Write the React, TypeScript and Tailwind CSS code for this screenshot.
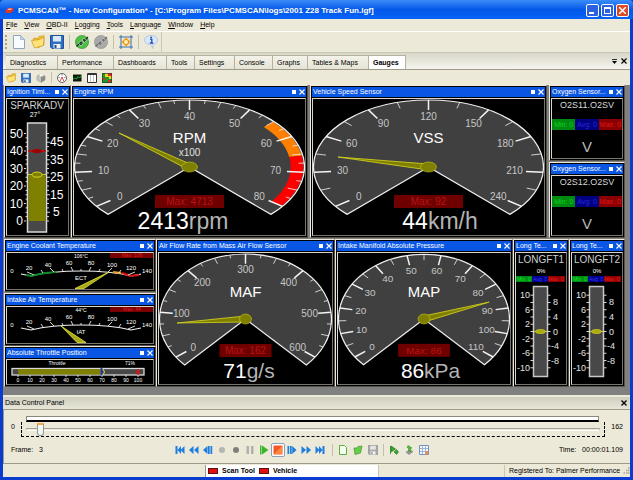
import { useState } from 'react';
import type { ReactNode } from 'react';

const menus = ['File', 'View', 'OBD-II', 'Logging', 'Tools', 'Language', 'Window', 'Help'];

const tabs = [
  { name: 'Diagnostics', width: 'w-[52px]' },
  { name: 'Performance', width: 'w-[56px]' },
  { name: 'Dashboards', width: 'w-[53px]' },
  { name: 'Tools', width: 'w-[28px]' },
  { name: 'Settings', width: 'w-[40px]' },
  { name: 'Console', width: 'w-[38px]' },
  { name: 'Graphs', width: 'w-[35px]' },
  { name: 'Tables & Maps', width: 'w-[61px]' },
  { name: 'Gauges', width: 'w-[37px]' },
];

/* ---------- icons ---------- */

const NewIcon = () => (
  <svg viewBox="0 0 14 14" className="size-full">
    <path d="M1.500 .5h7l4 4v9h-11z" fill="#f8fbff" stroke="#8ea6c4" />
    <path d="M8.500 .5v4h4z" fill="#c9daf0" stroke="#8ea6c4" strokeWidth=".7" />
  </svg>
);

const OpenIcon = () => (
  <svg viewBox="0 0 14 14" className="size-full">
    <path d="M2 5l1-2 4 .5L8 1.500l5-.8v9l-6 3z" fill="#f5c22e" stroke="#c78d12" strokeWidth=".6" />
    <path d="M.5 5.500l7.500-.8L13 2l-.5 8.500-9 2.500z" fill="#ffe27a" stroke="#c78d12" strokeWidth=".6" />
  </svg>
);

const SaveIcon = ({ muted = false }: { muted?: boolean }) => (
  <svg viewBox="0 0 14 14" className="size-full">
    <path d="M.5 .5h13v13H2L.5 12z" fill={muted ? '#a9a9a9' : '#2f6fc4'} stroke={muted ? '#8c8c8c' : '#1e4f99'} />
    <path d="M3 1h8v5.500H3z" fill={muted ? '#e4e4e0' : '#dbe9fb'} />
    <path d="M3.500 9h7v4.500h-7z" fill="#f2f2f2" />
    <path d="M4.500 10h2v3h-2z" fill={muted ? '#8c8c8c' : '#1e4f99'} />
  </svg>
);

const PlugIcon = ({ on = false }: { on?: boolean }) => (
  <svg viewBox="0 0 14 14" className="size-full">
    <circle cx="7" cy="7" r="6.600" fill={on ? '#4cc244' : '#a9a9a9'} stroke={on ? '#2c8a2c' : '#8e8e8e'} strokeWidth=".6" />
    <path d="M1.500 11.500L4 9M10 5l3-3" stroke={on ? '#223' : '#666'} strokeWidth="1.200" />
    <path d="M3.500 8.500L6 5.500l2.500 2.500L6 11zM7 5l2-2 2.500 2.500-2 2z" fill={on ? '#334a36' : '#777'} stroke={on ? '#d8f0d8' : '#d0d0d0'} strokeWidth=".6" />
  </svg>
);

const FitIcon = () => (
  <svg viewBox="0 0 14 14" className="size-full">
    <path d="M2 0v14M12 0v14M0 2h14M0 12h14" stroke="#3a6ea8" strokeWidth="1" />
    <path d="M7 2.500l2 2H5zM7 11.500l2-2H5zM2.500 7l2-2v4zM11.500 7l-2-2v4z" fill="#f2a516" />
    <circle cx="7" cy="7" r="2.600" fill="#fff0b8" stroke="#e59a12" strokeWidth="1.200" />
  </svg>
);

const InfoIcon = () => (
  <svg viewBox="0 0 14 14" className="size-full">
    <path d="M7 .5C3 .5.500 2.500.5 5s2.500 4.500 6 4.500L9 13.500V9.200c3-.5 4.500-2.200 4.500-4.200C13.500 2.500 11 .5 7 .5z" fill="#dbe7fa" stroke="#a4b8dd" strokeWidth=".7" />
    <path d="M6 4.200h1.800v3.600M5.800 8h3.400" stroke="#1650b8" strokeWidth="1.300" fill="none" />
    <circle cx="7.200" cy="2.300" r=".9" fill="#1650b8" />
  </svg>
);

const PrintIcon = () => (
  <svg viewBox="0 0 10 10" className="size-full">
    <path d="M1 3l4-2 4 2v4L5 9.500 1 7z" fill="#c4c4c0" stroke="#999" strokeWidth=".6" />
    <path d="M5 4l4-1v4L5 9.500z" fill="#8b8b88" />
    <path d="M3 1.500L6 .5l1.500 2-3 1z" fill="#f6f6f2" />
  </svg>
);

const DialIcon = () => (
  <svg viewBox="0 0 10 10" className="size-full">
    <circle cx="5" cy="5" r="4.500" fill="#fff" stroke="#444" strokeWidth=".8" />
    <path d="M5 1v1.500M1.500 4.500H3M7 4.500h1.500" stroke="#666" strokeWidth=".7" />
    <path d="M5 4L3 8.500M5 4l2 4.500" stroke="#c33" strokeWidth=".9" />
  </svg>
);

const ScopeIcon = () => (
  <svg viewBox="0 0 10 10" className="size-full">
    <path d="M1 1.500h8.500v7H1z" fill="#0a1a0a" />
    <path d="M1 6l2-1 1.500 1L6 3.500 7.500 5 9 3" stroke="#25c53c" strokeWidth=".8" fill="none" />
  </svg>
);

const TableIcon = () => (
  <svg viewBox="0 0 10 10" className="size-full">
    <path d="M.5 .5h9v9h-9z" fill="#fff" stroke="#333" />
    <path d="M0 1.500h10" stroke="#333" strokeWidth="1" />
    <path d="M3.500 2v7.500M6.500 2v7.500" stroke="#999" strokeWidth=".6" />
  </svg>
);

const MapIcon = () => (
  <svg viewBox="0 0 10 10" className="size-full">
    <path d="M0 0h10v10H0z" fill="#1c9a2c" />
    <path d="M3 0h7v6H7V4H3z" fill="#f3d21c" />
    <path d="M6 0h4v3H6zM1 5h2v2H1zM6 7h3v2H6z" fill="#e02a1c" />
    <path d="M.5 .5h9v9h-9z" fill="none" stroke="#333" strokeWidth=".7" />
  </svg>
);

const media: Record<string, { d: string; fill: string }> = {
  'First frame': { d: 'M.5 1h2v8h-2zM2.500 5L6 1v8zM5.500 5L9.500 1v8z', fill: '#1b7ee0' },
  Rewind: { d: 'M0 5l4.500-4v8zM5 5l4.500-4v8z', fill: '#1b7ee0' },
  'Step back': { d: 'M0 5l4.500-4v8zM5 1h1.700v8H5zM7.500 1h1.700v8H7.500z', fill: '#1b7ee0' },
  Record: { d: 'M5 2a3 3 0 100 6 3 3 0 000-6z', fill: '#b4b4b0' },
  'Record marker': { d: 'M5 2a3 3 0 100 6 3 3 0 000-6z', fill: '#7f7f7c' },
  Pause: { d: 'M1.500 1h2.500v8H1.500zM6 1h2.500v8H6z', fill: '#b0b0ac' },
  Play: { d: 'M1 .5h1.500v9H1zM3 .5L9.500 5 3 9.500z', fill: '#3db52c' },
  Stop: { d: 'M.5 .5h9v9h-9z', fill: '#f4552a' },
  'Step forward': { d: 'M.5 1h1.700v8H.5zM3 1h1.700v8H3zM5.200 1l4.300 4-4.300 4z', fill: '#1b7ee0' },
  'Fast forward': { d: 'M.5 1L5 5 .5 9zM5.500 1L10 5 5.500 9z', fill: '#1b7ee0' },
  'Last frame': { d: 'M.5 1L4.500 5 .5 9zM4 1l3.500 4L4 9zM7.500 1h2v8h-2z', fill: '#1b7ee0' },
};

const MediaButton = ({ name, active }: { name: string; active?: boolean }) => (
  <button
    aria-label={name}
    className={
      active
        ? 'flex size-[14px] items-center justify-center rounded-[2px] border border-[#8ba0bd] bg-white'
        : 'flex size-[14px] items-center justify-center'
    }
  >
    <svg viewBox="0 0 10 10" className="size-[10px]">
      <path d={media[name].d} fill={media[name].fill} />
      {active && <path d="M1 9L9 1v8z" fill="#ff8a3c" />}
    </svg>
  </button>
);

const Green = ({ kind }: { kind: 'new' | 'open' | 'mark' | 'export' }) => (
  <svg viewBox="0 0 10 10" className="size-[10px]">
    {kind === 'new' && <path d="M1.500 .5h5l2 2v7h-7z" fill="#f4fff0" stroke="#57b13f" />}
    {kind === 'open' && <path d="M1 3l3 0 1-1.500 4-.5-1.500 7L2 9.500z" fill="#6bcc4c" stroke="#3d9a2a" strokeWidth=".7" />}
    {kind === 'mark' && (
      <>
        <path d="M1.500 1v8M2 1l4.500 3L2 7z" fill="#3aa82c" stroke="#2c7d22" strokeWidth=".8" />
        <path d="M7.500 4.500l2 2.500-2 2.500-2.500-2.500z" fill="#3aa82c" stroke="#1d5f16" strokeWidth=".5" />
      </>
    )}
    {kind === 'export' && (
      <>
        <path d="M2 7l4-2 3 1.500-4 3z" fill="#9a9a96" stroke="#6d6d6a" strokeWidth=".5" />
        <path d="M4 .5L8 3 6.500 3.500v3L4.500 6V3L3 2.500z" fill="#4fbd36" stroke="#2f8a20" strokeWidth=".5" />
      </>
    )}
  </svg>
);

const GridIcon = () => (
  <svg viewBox="0 0 10 10" className="size-[10px]">
    <path d="M.5 .5h9v9h-9z" fill="#f4f8ff" stroke="#7a92b8" />
    <path d="M3.500 1v8M6.500 1v8M1 3.500h8M1 6.500h8" stroke="#8fa4c6" strokeWidth=".8" />
    <path d="M6.500 6.500h3v3h-3z" fill="#e88a4a" />
  </svg>
);

const Sep = ({ className = 'h-[14px]' }: { className?: string }) => (
  <span className={`w-px shrink-0 bg-[#c2bfae] ${className}`} />
);

/* ---------- gauge windows ---------- */

const GaugeWindow = ({ title, className = '', children }: { title: string; className?: string; children: ReactNode }) => (
  <section className={`flex min-w-0 flex-col border border-t-[#ece9d8] border-l-[#ece9d8] border-r-[#55534c] border-b-[#55534c] bg-black p-px ${className}`}>
    <header className="flex h-[10px] shrink-0 items-center justify-between bg-[#0a56e4] px-px text-[7px] leading-[10px] text-white">
      <h2 className="whitespace-nowrap">{title}</h2>
      <div className="flex shrink-0 items-center gap-[3px]">
        <button aria-label={`Maximize ${title}`} className="size-[4px] bg-white" />
        <button aria-label={`Close ${title}`} className="size-[6px]">
          <svg viewBox="0 0 6 6" className="block size-full">
            <path d="M.5 .5l5 5M5.500 .5l-5 5" stroke="#fff" strokeWidth="1.100" />
          </svg>
        </button>
      </div>
    </header>
    <div className="mt-px min-h-0 flex-1 border border-t-[#d8d6cc] border-l-[#d8d6cc] border-r-[#77756c] border-b-[#77756c]">{children}</div>
  </section>
);

interface DialProps {
  name: string;
  note?: string;
  width: number;
  height: number;
  rx: number;
  ry: number;
  cy: number;
  max: number;
  step: number;
  parts: number;
  value: string;
  unit: string;
  valueX: number;
  size: number;
  needle: [number, number];
  maxText: string;
  maxWidth: number;
  zones?: { from: number; to: number; color: string }[];
}

const Dial = (p: DialProps) => {
  const cx = p.width / 2;
  // the scale runs from 216° to -36°, the face itself reaches 9° further on both sides
  const point = (deg: number, k: number) => {
    const a = (deg * Math.PI) / 180;
    return [cx + p.rx * k * Math.cos(a), p.cy - p.ry * k * Math.sin(a)];
  };
  const angle = (v: number) => 216 - (v / p.max) * 252;
  const [x1, y1] = point(225, 1);
  const [x2, y2] = point(-45, 1);
  const count = (p.max / p.step) * p.parts;
  const [nx, ny] = p.needle;
  const len = Math.hypot(nx - cx, ny - p.cy);
  const ox = (-(ny - p.cy) / len) * 3;
  const oy = ((nx - cx) / len) * 3;

  return (
    <svg viewBox={`0 0 ${p.width} ${p.height}`} className="block size-full" role="img" aria-label={`${p.name} ${p.value}${p.unit}`}>
      <path d={`M${cx} ${p.cy}L${x1} ${y1}A${p.rx} ${p.ry} 0 1 1 ${x2} ${y2}Z`} fill="#404040" stroke="#f0f0f0" strokeWidth="1.200" />
      {p.zones?.map((z) => {
        const a = point(angle(z.from), 0.99);
        const b = point(angle(z.to), 0.99);
        const c = point(angle(z.to), 0.88);
        const d = point(angle(z.from), 0.88);
        return (
          <path
            key={z.color}
            fill={z.color}
            d={`M${a}A${p.rx * 0.99} ${p.ry * 0.99} 0 0 1 ${b}L${c}A${p.rx * 0.88} ${p.ry * 0.88} 0 0 0 ${d}Z`}
          />
        );
      })}
      {Array.from({ length: count + 1 }, (_, i) => {
        const deg = angle((i * p.step) / p.parts);
        const major = i % p.parts === 0;
        const half = p.parts === 2 || i % p.parts === p.parts / 2;
        const [ax, ay] = point(deg, 1);
        const [bx, by] = point(deg, major ? 0.85 : half ? 0.91 : 0.95);
        return <line key={i} x1={ax} y1={ay} x2={bx} y2={by} stroke="#f4f4f4" strokeWidth={major ? 1.5 : 0.8} />;
      })}
      {Array.from({ length: p.max / p.step + 1 }, (_, i) => {
        const [lx, ly] = point(angle(i * p.step), 0.75);
        return (
          <text key={i} x={lx} y={ly + 3} textAnchor="middle" fontSize="10" fill="#c6c6c6">
            {i * p.step}
          </text>
        );
      })}
      <text x={cx} y="44" textAnchor="middle" fontSize="15" fill="#fff">{p.name}</text>
      {p.note && <text x={cx} y="57" textAnchor="middle" fontSize="10" fill="#e0e0e0">{p.note}</text>}
      <rect x={cx - p.maxWidth / 2} y={p.height - 40} width={p.maxWidth} height="13" fill="#6e0000" />
      <text x={cx} y={p.height - 30} textAnchor="middle" fontSize="10" fill="#b81414">{p.maxText}</text>
      <path d={`M${cx + ox} ${p.cy + oy}L${nx} ${ny}L${cx - ox} ${p.cy - oy}Z`} fill="#808000" stroke="#d8d820" strokeWidth=".8" />
      <ellipse cx={cx} cy={p.cy} rx={p.size > 22 ? 8 : 6} ry="5" fill="#808000" stroke="#c8c820" strokeWidth=".6" />
      <text x={p.valueX} y={p.height - 6} textAnchor="middle" fontSize={p.size} fill="#fff">
        {p.value}
        <tspan fill="#b4b4b4">{p.unit}</tspan>
      </text>
    </svg>
  );
};

const SparkBar = () => {
  const y = (v: number) => 122 - v * 1.75;
  return (
    <svg viewBox="0 0 61 136" className="block size-full" role="img" aria-label="SPARKADV 27°">
      <text x="30" y="10" textAnchor="middle" fontSize="10" fill="#d0d0d0">SPARKADV</text>
      <text x="28" y="18" textAnchor="middle" fontSize="7" fill="#fff">27°</text>
      <rect x="20.500" y="24" width="19" height="109" fill="#484848" stroke="#d8d8d8" strokeWidth="1.500" />
      <rect x="21.500" y={y(26)} width="17" height={26 * 1.75} fill="#808000" />
      {Array.from({ length: 21 }, (_, i) => (
        <path key={i} d={`M${i % 4 === 0 ? 17 : 18.500} ${y(i * 2.5)}h2M40 ${y(i * 2.5)}h${i % 4 === 2 ? 3 : 2}`} stroke="#eee" strokeWidth=".9" />
      ))}
      {[0, 10, 20, 30, 40, 50].map((v) => (
        <text key={v} x="16" y={y(v) + 4} textAnchor="end" fontSize="12" fill="#fff">{v}</text>
      ))}
      {[5, 15, 25, 35, 45].map((v) => (
        <text key={v} x={v === 5 ? 46 : 43} y={y(v) + 4} fontSize="12" fill="#fff">{v}</text>
      ))}
      <path d={`M21 ${y(40)}h18`} stroke="#d00000" strokeWidth="1.500" />
      <ellipse cx="30" cy={y(40)} rx="5" ry="2" fill="#a00000" />
      <path d={`M21 ${y(26.5)}h18`} stroke="#d8d820" />
      <ellipse cx="30" cy={y(26.5)} rx="5" ry="2.500" fill="#808000" stroke="#d8d820" />
    </svg>
  );
};

const TrimBar = ({ name }: { name: string }) => {
  const y = (v: number) => 78.5 - v * 3.63;
  return (
    <svg viewBox="0 0 50 131" className="block size-full" role="img" aria-label={`${name} 0%`}>
      <text x="25" y="10" textAnchor="middle" fontSize="10" fill="#d0d0d0">{name}</text>
      <text x="25" y="20" textAnchor="middle" fontSize="6" fill="#fff">0%</text>
      <rect x="0" y="23" width="16" height="6" fill="#008a10" />
      <rect x="16" y="23" width="16" height="6" fill="#000090" />
      <rect x="32" y="23" width="17" height="6" fill="#900000" />
      <g fontSize="5" textAnchor="middle">
        <text x="8" y="28" fill="#10f030">Min: 0</text>
        <text x="24" y="28" fill="#3838e8">Avg: 0</text>
        <text x="40" y="28" fill="#f02020">Max: 0</text>
      </g>
      <rect x="17.500" y="33.500" width="14" height="90" fill="#484848" stroke="#c8c8c8" strokeWidth="1.500" />
      {Array.from({ length: 11 }, (_, i) => (
        <path key={i} d={`M14.500 ${y(i * 2 - 10)}h3M32 ${y(i * 2 - 10)}h2.500`} stroke="#eee" strokeWidth=".9" />
      ))}
      {[10, 6, 2, -2, -6, -10].map((v) => (
        <text key={v} x="14" y={y(v) + 3} textAnchor="end" fontSize="9" fill="#e4e4e4">{v}</text>
      ))}
      {[8, 4, 0, -4, -8].map((v) => (
        <text key={v} x={v < 0 ? 35 : 37} y={y(v) + 3} fontSize="9" fill="#e4e4e4">{v}</text>
      ))}
      <path d={`M18 ${y(0)}h13`} stroke="#d8d820" />
      <ellipse cx="24.500" cy={y(0)} rx="5" ry="2" fill="#a8a810" stroke="#d8d820" strokeWidth=".7" />
    </svg>
  );
};

const arcLabels = [
  [0, 5, 20], [20, 22, 17], [40, 41, 14], [60, 62, 12],
  [80, 84, 12], [100, 105, 14], [120, 124, 17], [140, 140, 20],
];

const ArcGauge = ({ name, value, max, tip, zones = false }: { name: string; value: string; max: string; tip: number; zones?: boolean }) => (
  <svg viewBox="0 0 146 36" className="block size-full" role="img" aria-label={`${name} ${value}`}>
    <text x="74" y="5" textAnchor="middle" fontSize="5" fill="#fff">{value}</text>
    <rect x="103" y="0" width="43" height="5" fill="#780000" />
    <text x="125" y="4" textAnchor="middle" fontSize="5" fill="#e02020">{max}</text>
    <path d="M14 21l10 2Q44 18 74 18t50 5l10-2" fill="none" stroke="#f0f0f0" strokeWidth="1.200" />
    {zones && (
      <>
        <path d="M19 22l5 1q10-3 25-4" fill="none" stroke="#0b8a2a" strokeWidth="2" />
        <path d="M106 19l8 1" fill="none" stroke="#f0a020" strokeWidth="2" />
        <path d="M115 20l9 3 8-1" fill="none" stroke="#e01010" strokeWidth="2" />
      </>
    )}
    <path d="M20 19l7 3M34 17l2 3M43 15l4 4M55 16l1 2M64 14l2 4M74 16v2M84 14l-2 4M93 16l-1 2M105 15l-4 4M114 17l-2 3M128 19l-7 3" stroke="#f0f0f0" strokeWidth=".9" />
    <g fontSize="6" fill="#fff" textAnchor="middle">
      {arcLabels.map(([v, x, y]) => (
        <text key={v} x={x} y={y}>{v}</text>
      ))}
    </g>
    <text x="74" y="27" textAnchor="middle" fontSize="6" fill="#fff">{name}</text>
    <path d={`M${tip < 74 ? 70 : 68} 35.500h9L${tip} 19z`} fill="#a8a818" stroke="#e4e440" strokeWidth=".8" />
  </svg>
);

const ThrottleBar = () => (
  <svg viewBox="0 0 146 24" className="block size-full" role="img" aria-label="Throttle 71%">
    <text x="50" y="5" textAnchor="middle" fontSize="5" fill="#fff">Throttle</text>
    <text x="123" y="5" textAnchor="middle" fontSize="5" fill="#fff">71%</text>
    <rect x="5" y="8.500" width="132" height="6.500" fill="#484848" stroke="#d8d8d8" strokeWidth="1.300" />
    <rect x="11" y="9" width="84" height="5.500" fill="#808000" />
    <path d="M94.500 8v7.500" stroke="#1830d0" strokeWidth="1.800" />
    <path d="M96 9q3 3 0 6" fill="none" stroke="#e4e440" />
    <ellipse cx="131" cy="12" rx="1.500" ry="3" fill="#e01010" />
    {Array.from({ length: 11 }, (_, i) => (
      <g key={i}>
        <path d={`M${11 + i * 12} 15v2`} stroke="#fff" strokeWidth=".8" />
        <text x={11 + i * 12} y="22" textAnchor="middle" fontSize="5" fill="#fff">{i * 10}</text>
      </g>
    ))}
  </svg>
);

const Oxygen = ({ name }: { name: string }) => (
  <div className="flex h-full flex-col items-center">
    <p className="mt-px text-[9px] leading-[11px] text-[#d8d8d8]">{name}</p>
    <div className="mt-2 grid w-full grid-cols-3 text-center text-[7px] leading-[11px] whitespace-nowrap">
      <span className="bg-[#008a10] text-[#10d020]">Min: 0</span>
      <span className="bg-[#000080] text-[#2828d8]">Avg: 0</span>
      <span className="bg-[#8a0000] text-[#e01818]">Max: 0</span>
    </div>
    <p className="mt-2 text-[15px] leading-[18px] text-[#b8b8b8]">V</p>
  </div>
);

/* ---------- app ---------- */

export default function App() {
  const [tab, setTab] = useState('Gauges');
  const [frame, setFrame] = useState(3);

  return (
    <div className="flex min-h-screen flex-col bg-[#0a3cd0] font-['Liberation_Sans',Arial,sans-serif] text-[7px] leading-[10px] text-black">
      <header className="flex h-[19px] items-center gap-1 rounded-t-[4px] bg-gradient-to-b from-[#3a8cf8] via-[#0458e8] to-[#0464f8] pr-1 pl-[5px] pt-0.5">
        <svg viewBox="0 0 9 7" className="h-[7px] w-[9px]">
          <path d="M0 4l3-3h5l1 2-3 3H1z" fill="#d83a2a" />
          <path d="M2 3l2-1.500h3L6 3z" fill="#f4b0a0" />
        </svg>
        <h1 className="min-w-0 flex-1 truncate text-[8px] font-bold text-white">
          PCMSCAN™ - New Configuration* - [C:\Program Files\PCMSCAN\logs\2001 Z28 Track Fun.lgf]
        </h1>
        <div className="flex gap-0.5">
          <button aria-label="Minimize" className="flex size-[13px] items-end rounded-[2px] border border-white bg-[#2c62e0] p-0.5">
            <span className="h-[2px] w-[5px] bg-white" />
          </button>
          <button aria-label="Restore" className="size-[13px] rounded-[2px] border border-white bg-[#2c62e0] p-0.5">
            <span className="block h-[7px] w-[7px] border border-t-2 border-white" />
          </button>
          <button aria-label="Close" className="size-[13px] rounded-[2px] border border-white bg-[#dc4a28] p-0.5">
            <svg viewBox="0 0 7 7" className="block size-[7px]">
              <path d="M0 0l7 7M7 0L0 7" stroke="#fff" strokeWidth="1.500" />
            </svg>
          </button>
        </div>
      </header>

      <div className="mx-[3px] mb-[3px] flex flex-1 flex-col bg-[#ece9d8]">
        <nav className="flex h-[13px] items-center gap-[7px] border-b border-white pl-[3px]">
          {menus.map((m) => (
            <button key={m} className="first-letter:underline">
              {m}
            </button>
          ))}
        </nav>

        <div className="flex border-b border-[#c9c6b4]">
          <div className="flex h-[20px] items-center gap-[5px] border-r border-[#c9c6b4] pr-[3px] pl-0.5">
            <span className="h-[14px] border-l-2 border-dotted border-[#a5a292]" />
            <button aria-label="New" className="size-[14px]"><NewIcon /></button>
            <button aria-label="Open" className="size-[14px]"><OpenIcon /></button>
            <button aria-label="Save" className="size-[14px]"><SaveIcon /></button>
            <Sep />
            <button aria-label="Connect" className="size-[14px]"><PlugIcon on /></button>
            <button aria-label="Disconnect" className="size-[14px]"><PlugIcon /></button>
            <Sep />
            <button aria-label="Fit to window" className="size-[14px]"><FitIcon /></button>
            <Sep />
            <button aria-label="About" className="size-[14px]"><InfoIcon /></button>
          </div>
        </div>

        <div className="flex h-[17px] items-end border-b border-[#9d9a8b] bg-gradient-to-b from-[#d9d7c9] to-[#f6f5ee] pl-[3px]">
          {tabs.map((t) => (
            <button
              key={t.name}
              onClick={() => setTab(t.name)}
              className={`h-[14px] shrink-0 border-t border-r border-[#b5b2a2] text-left whitespace-nowrap pl-1 ${t.width} ${
                t.name === tab ? 'bg-white font-bold' : 'bg-gradient-to-b from-[#f4f3ea] to-[#e6e4d5]'
              }`}
            >
              {t.name}
            </button>
          ))}
          <div className="ml-auto flex items-center gap-1 self-center pr-[3px]">
            <button aria-label="Tab list">
              <svg viewBox="0 0 5 5" className="block size-[5px]">
                <path d="M0 .5h5" stroke="#000" strokeWidth=".8" />
                <path d="M0 2h5L2.500 5z" />
              </svg>
            </button>
            <button aria-label="Close tab">
              <svg viewBox="0 0 6 6" className="block size-[6px]">
                <path d="M.5 .5l5 5M5.500 .5l-5 5" stroke="#000" strokeWidth="1.200" />
              </svg>
            </button>
          </div>
        </div>

        <div className="flex h-[15px] items-center gap-[5px] pl-[3px]">
          <button aria-label="Open layout" className="size-[10px]"><OpenIcon /></button>
          <button aria-label="Save layout" className="size-[10px]"><SaveIcon /></button>
          <button aria-label="Print" className="size-[10px]"><PrintIcon /></button>
          <Sep className="h-[11px]" />
          <button aria-label="Add gauge" className="size-[10px]"><DialIcon /></button>
          <button aria-label="Add graph" className="size-[10px]"><ScopeIcon /></button>
          <button aria-label="Add table" className="size-[10px]"><TableIcon /></button>
          <button aria-label="Add map" className="size-[10px]"><MapIcon /></button>
        </div>

        <main className="flex-1 bg-[#808080] pr-[5px] pb-2 pl-px">
          <div className="grid h-[153px] grid-cols-[67fr_239fr_239fr_76fr]">
            <GaugeWindow title="Ignition Timi...">
              <SparkBar />
            </GaugeWindow>
            <GaugeWindow title="Engine RPM" className="mr-0.5">
              <Dial
                name="RPM" note="x100" width={231} height={136} rx={115} ry={67} cy={68}
                max={80} step={10} parts={4} value="2413" unit="rpm" valueX={109} size={23}
                needle={[45, 34]} maxText="Max: 4713" maxWidth={69}
                zones={[
                  { from: 55, to: 65.5, color: '#ff8000' },
                  { from: 65.5, to: 80, color: '#ff0000' },
                ]}
              />
            </GaugeWindow>
            <GaugeWindow title="Vehicle Speed Sensor" className="mr-0.5">
              <Dial
                name="VSS" width={231} height={136} rx={115} ry={67} cy={68}
                max={240} step={30} parts={2} value="44" unit="km/h" valueX={127} size={23}
                needle={[25, 58]} maxText="Max: 92" maxWidth={69}
              />
            </GaugeWindow>
            <div className="grid min-w-0 grid-rows-2 gap-px">
              <GaugeWindow title="Oxygen Sensor...">
                <Oxygen name="O2S11.O2SV" />
              </GaugeWindow>
              <GaugeWindow title="Oxygen Sensor...">
                <Oxygen name="O2S12.O2SV" />
              </GaugeWindow>
            </div>
          </div>

          <div className="mt-px grid h-[148px] grid-cols-[152fr_179fr_178fr_56fr_56fr]">
            <div className="flex min-w-0 flex-col">
              <GaugeWindow title="Engine Coolant Temperature" className="h-[53px]">
                <ArcGauge name="ECT" value="106°C" max="Max: 106" tip={102} zones />
              </GaugeWindow>
              <GaugeWindow title="Intake Air Temperature" className="mt-px h-[53px]">
                <ArcGauge name="IAT" value="44°C" max="Max: 44" tip={54} />
              </GaugeWindow>
              <GaugeWindow title="Absolute Throttle Position" className="h-[41px]">
                <ThrottleBar />
              </GaugeWindow>
            </div>
            <GaugeWindow title="Air Flow Rate from Mass Air Flow Sensor">
              <Dial
                name="MAF" width={173} height={131} rx={86} ry={65} cy={66}
                max={600} step={100} parts={4} value="71" unit="g/s" valueX={90} size={21}
                needle={[18, 70]} maxText="Max: 162" maxWidth={52}
              />
            </GaugeWindow>
            <GaugeWindow title="Intake Manifold Absolute Pressure">
              <Dial
                name="MAP" width={173} height={131} rx={86} ry={65} cy={66}
                max={110} step={10} parts={2} value="86" unit="kPa" valueX={93} size={21}
                needle={[152, 49]} maxText="Max: 86" maxWidth={52}
              />
            </GaugeWindow>
            <GaugeWindow title="Long Te...">
              <TrimBar name="LONGFT1" />
            </GaugeWindow>
            <GaugeWindow title="Long Te...">
              <TrimBar name="LONGFT2" />
            </GaugeWindow>
          </div>
        </main>

        <section className="pt-0.5">
          <header className="flex h-[13px] items-center justify-between border-b border-[#9d9a8b] bg-gradient-to-b from-[#cfcdbd] to-[#e8e6d8] pr-[3px] pl-0.5">
            <h2>Data Control Panel</h2>
            <button aria-label="Close panel">
              <svg viewBox="0 0 6 6" className="block size-[6px]">
                <path d="M.5 .5l5 5M5.500 .5l-5 5" stroke="#000" strokeWidth="1.300" />
              </svg>
            </button>
          </header>

          <div className="flex h-[54px] flex-col justify-between border-b border-l border-[#9d9a8b] pt-[6px] pr-[7px] pb-[6px] pl-[7px]">
            <div className="flex items-center">
              <label htmlFor="frame" className="w-[10px]">0</label>
              <div className="min-w-0 flex-1">
                <div className="mr-[6px] ml-[5px] h-[6px] border border-t-[#8a887c] border-r-[#8a887c] border-b-2 border-l-[#8a887c] border-b-black bg-white" />
                <div className="flex h-[15px] items-center border border-t-0 border-dashed border-black px-1">
                  <input
                    id="frame"
                    type="range"
                    min={0}
                    max={162}
                    value={frame}
                    onChange={(e) => setFrame(Number(e.target.value))}
                    className="h-[13px] w-full appearance-none bg-transparent [&::-webkit-slider-runnable-track]:h-[3px] [&::-webkit-slider-runnable-track]:border [&::-webkit-slider-runnable-track]:border-t-[#a5a292] [&::-webkit-slider-runnable-track]:border-x-[#c9c6b4] [&::-webkit-slider-runnable-track]:border-b-white [&::-webkit-slider-thumb]:-mt-[6px] [&::-webkit-slider-thumb]:h-[13px] [&::-webkit-slider-thumb]:w-[7px] [&::-webkit-slider-thumb]:appearance-none [&::-webkit-slider-thumb]:rounded-t-[1px] [&::-webkit-slider-thumb]:rounded-b-[4px] [&::-webkit-slider-thumb]:border [&::-webkit-slider-thumb]:border-t-2 [&::-webkit-slider-thumb]:border-[#8a9a9c] [&::-webkit-slider-thumb]:border-t-[#f0a848] [&::-webkit-slider-thumb]:bg-[#f6f5ef]"
                  />
                </div>
              </div>
              <span className="w-[18px] text-right">162</span>
            </div>

            <div className="grid grid-cols-[163fr_auto_196fr] items-center">
              <p className="whitespace-pre">Frame:   {frame}</p>
              <div className="flex items-center">
                {Object.keys(media).map((name) => (
                  <MediaButton key={name} name={name} active={name === 'Stop'} />
                ))}
                <Sep className="mx-[5px] h-[12px]" />
                <div className="flex items-center gap-[5px]">
                  <button aria-label="New log"><Green kind="new" /></button>
                  <button aria-label="Open log"><Green kind="open" /></button>
                  <button aria-label="Save log" className="size-[10px]"><SaveIcon muted /></button>
                </div>
                <Sep className="mx-[5px] h-[12px]" />
                <div className="flex items-center gap-[5px]">
                  <button aria-label="Add marker"><Green kind="mark" /></button>
                  <button aria-label="Export log"><Green kind="export" /></button>
                  <button aria-label="View data"><GridIcon /></button>
                </div>
              </div>
              <p className="text-right whitespace-pre">Time:   00:00:01.109</p>
            </div>
          </div>
        </section>

        <footer className="grid h-[13px] grid-cols-[202fr_173fr_126fr_126fr] items-center pt-px">
          <span />
          <div className="flex h-full items-center gap-1 border-l border-[#9d9a8b] bg-white pl-0.5 font-bold">
            <span className="h-[6px] w-[10px] border border-[#601010] bg-[#e01010]" />
            Scan Tool
            <span className="h-[6px] w-[10px] border border-[#601010] bg-[#e01010]" />
            Vehicle
          </div>
          <span className="h-full border-l border-[#c9c6b4]" />
          <div className="flex h-full items-center justify-between border-l border-[#c9c6b4] pl-1 whitespace-nowrap">
            Registered To: Palmer Performance
            <svg viewBox="0 0 8 8" className="size-[8px]">
              <path d="M6 1h1.500M4 3.500h1.500M6 3.500h1.500M1.500 6H3M4 6h1.500M6 6h1.500" stroke="#a5a292" strokeWidth="1.500" />
            </svg>
          </div>
        </footer>
      </div>
    </div>
  );
}
